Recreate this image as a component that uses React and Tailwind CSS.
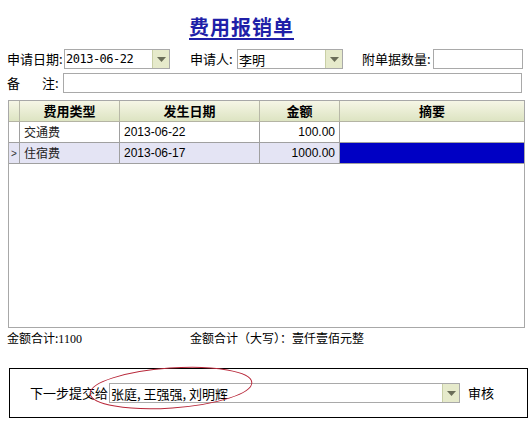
import React from 'react';

const font = { fontFamily: '"SimSun", "Noto Sans CJK SC", "Liberation Sans", sans-serif' };

function DropButton() {
  return (
    <div className="w-[17px] h-full bg-[#e6eacb] border-l border-[#c9cfa6] flex items-center justify-center shrink-0">
      <svg width={9} height={5} viewBox="0 0 9 5">
        <polygon points="0,0 9,0 4.5,5" fill="#6a6d58" />
      </svg>
    </div>
  );
}

function Combo({ value, className, textClass }) {
  return (
    <div className={`flex h-[20px] border border-[#a9a9a9] bg-white ${className}`}>
      <div className={`flex-1 flex items-center pl-[1px] text-black leading-none ${textClass}`}>{value}</div>
      <DropButton />
    </div>
  );
}

const rows = [
  { type: '交通费', date: '2013-06-22', amount: '100.00', note: '', current: false },
  { type: '住宿费', date: '2013-06-17', amount: '1000.00', note: '', current: true },
];

export default function App() {
  return (
    <div className="w-[532px] h-[426px] bg-white relative overflow-hidden text-[13px] text-black" style={font}>
      {/* Title */}
      <div className="pt-[12px] pl-[189px] h-[48px]">
        <span className="text-[20px] font-bold text-[#1f1fa8] underline underline-offset-[3px] tracking-[1px]">
          费用报销单
        </span>
      </div>

      {/* Row 1 */}
      <div className="flex items-center h-[20px] pl-[7px] mt-[1px]">
        <span className="w-[57px]">申请日期:</span>
        <Combo value="2013-06-22" className="w-[106px]" textClass="text-[12px] font-['DejaVu_Sans_Mono'] tracking-[-0.5px]" />
        <span className="ml-[20px] w-[47px]">申请人:</span>
        <Combo value="李明" className="w-[106px]" textClass="text-[13px]" />
        <span className="ml-[19px] w-[71px]">附单据数量:</span>
        <div className="w-[90px] h-[20px] border border-[#a9a9a9] bg-white" />
      </div>

      {/* Row 2 */}
      <div className="flex items-center h-[20px] pl-[7px] mt-[4px]">
        <span className="w-[35px]">备</span>
        <span className="w-[21px]">注:</span>
        <div className="w-[459px] h-[20px] border border-[#a9a9a9] bg-white" />
      </div>

      {/* Grid */}
      <div className="ml-[8px] mt-[7px] w-[517px] h-[228px] border border-[#a8a8a8] bg-white">
        <div className="flex h-[21px] bg-gradient-to-b from-[#f6f6e6] to-[#dde4c2] border-b border-[#b4b4a4] font-bold text-[13px]">
          <div className="w-[11px] border-r border-[#b8b8a8]" />
          <div className="w-[100px] border-r border-[#b8b8a8] flex items-center justify-center">费用类型</div>
          <div className="w-[140px] border-r border-[#b8b8a8] flex items-center justify-center">发生日期</div>
          <div className="w-[80px] border-r border-[#b8b8a8] flex items-center justify-center">金额</div>
          <div className="flex-1 flex items-center justify-center">摘要</div>
        </div>
        {rows.map((r) => (
          <div
            key={r.type}
            className={`flex h-[21px] border-b border-[#a0a0a0] text-[12px] ${r.current ? 'bg-[#e4e4f4]' : 'bg-white'}`}
          >
            <div className="w-[11px] border-r border-[#a0a0a0] flex items-center justify-center text-[10px] text-[#333]" style={{ fontFamily: '"Liberation Sans", sans-serif' }}>
              {r.current ? '>' : ''}
            </div>
            <div className="w-[100px] border-r border-[#a0a0a0] flex items-center pl-[4px] text-[#222]">{r.type}</div>
            <div className="w-[140px] border-r border-[#a0a0a0] flex items-center pl-[4px]" style={{ fontFamily: '"Liberation Sans", sans-serif' }}>
              {r.date}
            </div>
            <div className="w-[80px] border-r border-[#a0a0a0] flex items-center justify-end pr-[4px]" style={{ fontFamily: '"Liberation Sans", sans-serif' }}>
              {r.amount}
            </div>
            <div className={`flex-1 ${r.current ? 'bg-[#0000c4]' : ''}`}>{r.note}</div>
          </div>
        ))}
      </div>

      {/* Totals */}
      <div className="flex items-center h-[20px] pl-[7px] text-[12px]">
        <span className="w-[183px]">
          金额合计:<span style={{ fontFamily: '"Liberation Serif", serif' }} className="text-[12px]">1100</span>
        </span>
        <span>金额合计（大写）：壹仟壹佰元整</span>
      </div>

      {/* Submit box */}
      <div className="ml-[9px] mt-[20px] w-[519px] h-[50px] border border-black flex items-center pl-[20px]">
        <span className="w-[79px] text-[13px]">下一步提交给</span>
        <Combo value="张庭, 王强强, 刘明辉" className="w-[351px] h-[19px]" textClass="text-[13px]" />
        <span className="ml-[8px]">审核</span>
      </div>

      {/* Red annotation ellipse */}
      <svg className="absolute left-[84px] top-[361px] pointer-events-none" width={174} height={54} viewBox="0 0 174 54">
        <ellipse cx={87} cy={27} rx={81} ry={20} fill="none" stroke="#b8283a" strokeWidth={1} transform="rotate(-4 87 27)" />
      </svg>
    </div>
  );
}
